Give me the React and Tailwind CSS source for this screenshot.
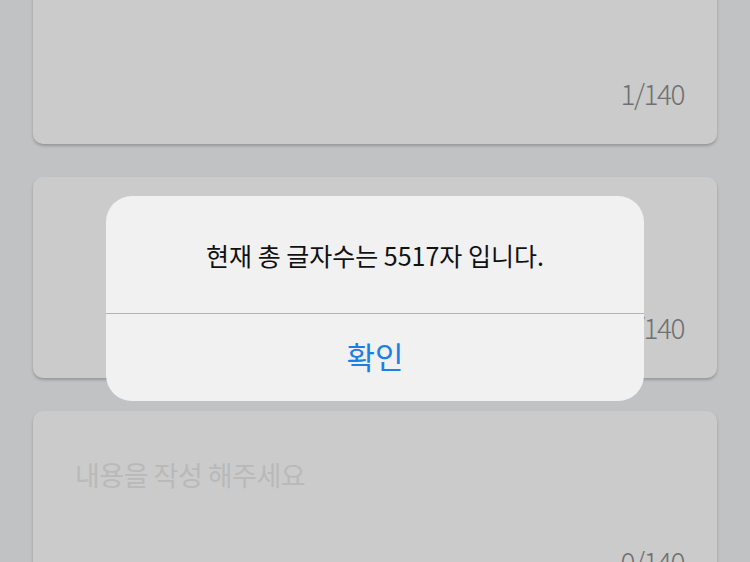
import React from 'react';

const cards = [
    { id: 1, text: '', count: 1 },
    { id: 2, text: '', count: 1 },
    { id: 3, text: '', count: 0 },
];

const Card = ({ text, count }) => (
    <div className="relative h-[201px] shrink-0 rounded-[10px] bg-[#cbcbcb] shadow-[0_2px_3px_rgba(0,0,0,0.22)]">
        <div className="pl-[42px] pt-[48px] text-[27px] leading-[32px] tracking-[-0.5px] text-[#b9b9b9]">
            {text || (count === 0 ? '내용을 작성 해주세요' : '')}
        </div>
        <div className="absolute right-[33px] bottom-[34px] text-[28px] font-light leading-[34px] tracking-[-1.5px] text-[#6f7072]">
            {count}/140
        </div>
    </div>
);

const App = () => {
    return (
        <div
            className="relative h-[562px] w-[750px] overflow-hidden bg-[#c1c2c4]"
            style={{ fontFamily: '"Noto Sans CJK KR", "Noto Sans", sans-serif' }}
        >
            <div className="mt-[-57px] flex flex-col gap-[33px] px-[33px]">
                {cards.map(c => (
                    <Card key={c.id} text={c.text} count={c.count} />
                ))}
            </div>

            {/* Alert */}
            <div className="absolute left-[106px] top-[196px] w-[538px] overflow-hidden rounded-[26px] bg-[#f1f1f1]">
                <div className="flex h-[117px] items-center justify-center pt-[2px] text-[25px] tracking-[0px] text-[#111]">
                    현재 총 글자수는 5517자 입니다.
                </div>
                <div className="h-px bg-[#b3b3b3]" />
                <div className="flex h-[87px] items-center justify-center pb-[2px] text-[31px] text-[#1a7fe6]">
                    확인
                </div>
            </div>
        </div>
    );
};

export default App;
